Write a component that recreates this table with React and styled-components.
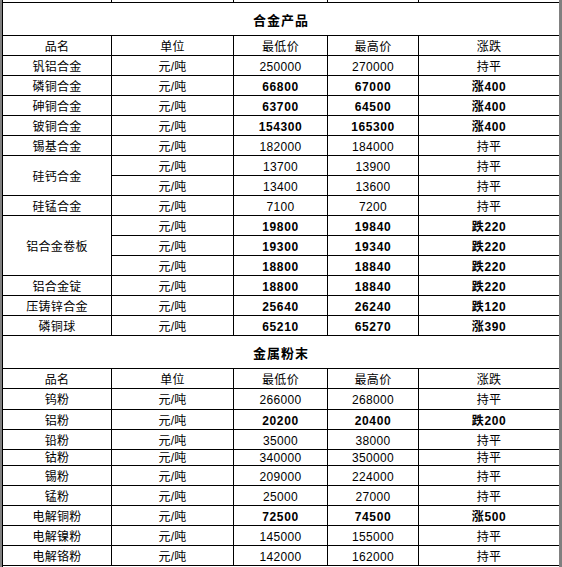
import styled, { createGlobalStyle } from 'styled-components';

const GlobalStyle = createGlobalStyle`
  html, body {
    margin: 0;
    padding: 0;
    background: #fff;
  }
  body {
    font-family: "Liberation Sans", "Noto Sans CJK SC", sans-serif;
    color: #000;
  }
`;

const Page = styled.div`
  display: flex;
  width: 562px;
  min-height: 100vh;
  box-sizing: border-box;
  border-left: 2px solid #808080;
  border-right: 3px solid #808080;
  overflow: hidden;
`;

const Table = styled.table`
  width: 557px;
  border-collapse: collapse;
  table-layout: fixed;
  flex: none;
`;

const Row = styled.tr`
  height: ${(p) => p.$h || 20}px;
`;

const Cell = styled.td`
  border: 1px solid #000;
  padding: ${(p) => (p.$tight ? '1px 0 0 0' : '3px 0 0 0')};
  text-align: center;
  vertical-align: middle;
  font-size: 12px;
  line-height: 14px;
  white-space: nowrap;
  font-weight: ${(p) => (p.$bold ? 700 : 400)};
  letter-spacing: ${(p) => (p.$bold ? '0.6px' : '0.3px')};
`;

const TopEdge = styled.td`
  border: 1px solid #000;
  border-top: none;
  padding: 0;
`;

const TitleCell = styled.td`
  border: 1px solid #000;
  padding: 1px 0 0 0;
  text-align: center;
  vertical-align: middle;
  font-size: 13px;
  font-weight: 700;
  letter-spacing: 1px;
`;

const alloys = [
  { name: '钒铝合金', rows: [['250000', '270000', '持平']] },
  { name: '磷铜合金', bold: true, rows: [['66800', '67000', '涨400']] },
  { name: '砷铜合金', bold: true, rows: [['63700', '64500', '涨400']] },
  { name: '铍铜合金', bold: true, rows: [['154300', '165300', '涨400']] },
  { name: '锡基合金', rows: [['182000', '184000', '持平']] },
  {
    name: '硅钙合金',
    rows: [
      ['13700', '13900', '持平'],
      ['13400', '13600', '持平'],
    ],
  },
  { name: '硅锰合金', rows: [['7100', '7200', '持平']] },
  {
    name: '铝合金卷板',
    bold: true,
    rows: [
      ['19800', '19840', '跌220'],
      ['19300', '19340', '跌220'],
      ['18800', '18840', '跌220'],
    ],
  },
  { name: '铝合金锭', bold: true, rows: [['18800', '18840', '跌220']] },
  { name: '压铸锌合金', bold: true, rows: [['25640', '26240', '跌120']] },
  { name: '磷铜球', bold: true, rows: [['65210', '65270', '涨390']] },
];

const powders = [
  { name: '钨粉', rows: [['266000', '268000', '持平']], h: 21 },
  { name: '铝粉', bold: true, rows: [['20200', '20400', '跌200']] },
  { name: '铅粉', rows: [['35000', '38000', '持平']] },
  { name: '钴粉', rows: [['340000', '350000', '持平']], h: 16 },
  { name: '锡粉', rows: [['209000', '224000', '持平']] },
  { name: '锰粉', rows: [['25000', '27000', '持平']] },
  { name: '电解铜粉', bold: true, rows: [['72500', '74500', '涨500']] },
  { name: '电解镍粉', rows: [['145000', '155000', '持平']] },
  { name: '电解铬粉', rows: [['142000', '162000', '持平']] },
];

const Section = ({ title, items }) => (
  <>
    <Row $h={33}>
      <TitleCell colSpan={5}>{title}</TitleCell>
    </Row>
    <Row>
      <Cell>品名</Cell>
      <Cell>单位</Cell>
      <Cell>最低价</Cell>
      <Cell>最高价</Cell>
      <Cell>涨跌</Cell>
    </Row>
    {items.map((item) =>
      item.rows.map((r, i) => {
        const tight = item.h && item.h < 18;
        return (
          <Row key={item.name + i} $h={item.h}>
            {i === 0 && (
              <Cell rowSpan={item.rows.length} $tight={tight}>
                {item.name}
              </Cell>
            )}
            <Cell $tight={tight}>元/吨</Cell>
            <Cell $tight={tight} $bold={item.bold}>{r[0]}</Cell>
            <Cell $tight={tight} $bold={item.bold}>{r[1]}</Cell>
            <Cell $tight={tight} $bold={item.bold}>{r[2]}</Cell>
          </Row>
        );
      })
    )}
  </>
);

const App = () => {
  return (
    <>
      <GlobalStyle />
      <Page>
        <Table>
          <colgroup>
            <col style={{ width: 109 }} />
            <col style={{ width: 122 }} />
            <col style={{ width: 94 }} />
            <col style={{ width: 91 }} />
            <col style={{ width: 141 }} />
          </colgroup>
          <tbody>
            <Row $h={2}>
              <TopEdge />
              <TopEdge />
              <TopEdge />
              <TopEdge />
              <TopEdge />
            </Row>
            <Section title="合金产品" items={alloys} />
            <Section title="金属粉末" items={powders} />
            <Row $h={33}>
              <TitleCell colSpan={5} />
            </Row>
          </tbody>
        </Table>
      </Page>
    </>
  );
};

export default App;
